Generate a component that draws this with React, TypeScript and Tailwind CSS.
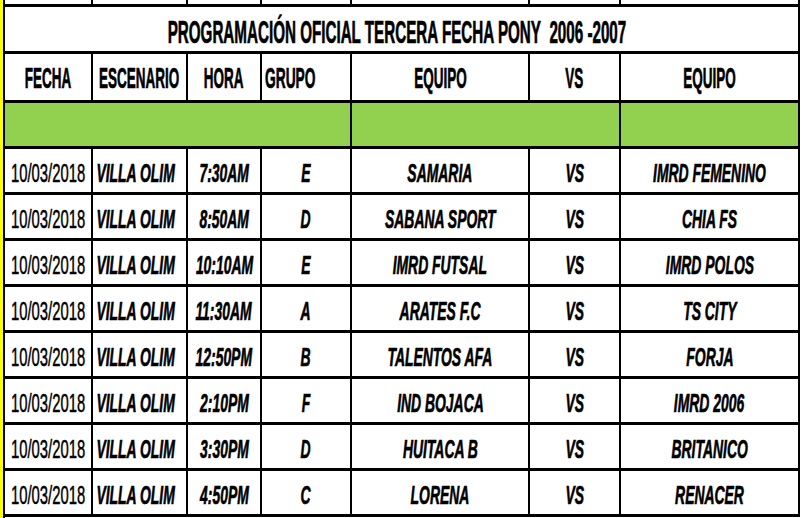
const cols = "grid grid-cols-[88px_95px_74px_90px_178px_91px_179px]";

const rows = [
  { hora: "7:30AM", grupo: "E", local: "SAMARIA", visita: "IMRD FEMENINO" },
  { hora: "8:50AM", grupo: "D", local: "SABANA SPORT", visita: "CHIA FS" },
  { hora: "10:10AM", grupo: "E", local: "IMRD FUTSAL", visita: "IMRD POLOS" },
  { hora: "11:30AM", grupo: "A", local: "ARATES F.C", visita: "TS CITY" },
  { hora: "12:50PM", grupo: "B", local: "TALENTOS AFA", visita: "FORJA" },
  { hora: "2:10PM", grupo: "F", local: "IND BOJACA", visita: "IMRD 2006" },
  { hora: "3:30PM", grupo: "D", local: "HUITACA B", visita: "BRITANICO" },
  { hora: "4:50PM", grupo: "C", local: "LORENA", visita: "RENACER" },
];

const Cell = ({
  children,
  className = "",
}: {
  children?: React.ReactNode;
  className?: string;
}) => (
  <div
    className={`flex items-center justify-center border-r-2 border-b-[3px] border-black ${className}`}
  >
    {children}
  </div>
);

const Head = ({ children }: { children: React.ReactNode }) => (
  <span className="inline-block whitespace-nowrap text-[29px] leading-none font-bold scale-x-[0.465] [-webkit-text-stroke:0.7px_black]">
    {children}
  </span>
);

const Data = ({ children }: { children: React.ReactNode }) => (
  <span className="inline-block whitespace-nowrap text-[26.5px] leading-none font-bold italic scale-x-[0.525] [-webkit-text-stroke:0.7px_black]">
    {children}
  </span>
);

const App = () => {
  return (
    <main className="flex h-[518px] w-[803px] overflow-hidden bg-white font-['Liberation_Sans',Arial,sans-serif] text-black">
      <div className="w-[3px] shrink-0 bg-[#ffff00]" />
      <div className="flex w-[797px] flex-col border-l-2 border-black">
        {/* fila cortada arriba */}
        <div className={`${cols} h-[7px]`}>
          <Cell />
          <Cell />
          <Cell />
          <Cell />
          <Cell />
          <Cell />
          <Cell />
        </div>

        {/* titulo */}
        <div className="flex h-[47px] items-center justify-center border-r-2 border-b-[3px] border-black pt-[6px] pr-[10px]">
          <span className="inline-block whitespace-nowrap text-[31px] leading-none font-bold scale-x-[0.49] [-webkit-text-stroke:0.7px_black]">
            PROGRAMACIÓN OFICIAL TERCERA FECHA PONY&nbsp; 2006 -2007
          </span>
        </div>

        {/* encabezados */}
        <div className={`${cols} h-[49px]`}>
          <Cell className="pt-[2px]"><Head>FECHA</Head></Cell>
          <Cell className="pt-[2px]"><Head>ESCENARIO</Head></Cell>
          <Cell className="pt-[2px]"><Head>HORA</Head></Cell>
          <Cell className="!justify-start pl-[3px] pt-[2px]">
            <span className="inline-block origin-left whitespace-nowrap text-[29px] leading-none font-bold scale-x-[0.475] [-webkit-text-stroke:0.7px_black]">
              GRUPO
            </span>
          </Cell>
          <Cell className="pt-[2px]"><Head>EQUIPO</Head></Cell>
          <Cell className="pt-[2px]"><Head>VS</Head></Cell>
          <Cell className="pt-[2px]"><Head>EQUIPO</Head></Cell>
        </div>

        {/* fila verde */}
        <div className={`${cols} h-[46px] bg-[#92d050]`}>
          <Cell className="col-span-4" />
          <Cell className="col-span-2" />
          <Cell />
        </div>

        {rows.map((r, i) => (
          <div key={i} className={`${cols} h-[46px] shrink-0`}>
            <Cell className="pt-[5px]">
              <span className="inline-block whitespace-nowrap text-[26px] leading-none scale-x-[0.57] [-webkit-text-stroke:0.5px_black]">
                10/03/2018
              </span>
            </Cell>
            <Cell className="pt-[5px] pr-[8px]"><Data>VILLA OLIM</Data></Cell>
            <Cell className="pt-[5px]"><Data>{r.hora}</Data></Cell>
            <Cell className="pt-[5px]"><Data>{r.grupo}</Data></Cell>
            <Cell className="pt-[5px]"><Data>{r.local}</Data></Cell>
            <Cell className="pt-[5px]"><Data>VS</Data></Cell>
            <Cell className="pt-[5px]"><Data>{r.visita}</Data></Cell>
          </div>
        ))}
      </div>
    </main>
  );
};

export default App;
